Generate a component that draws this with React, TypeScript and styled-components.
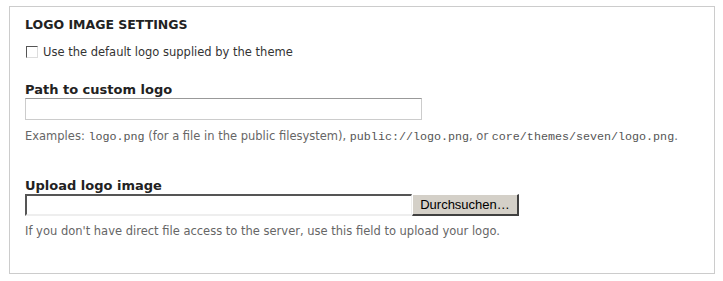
import React from "react";
import styled, { createGlobalStyle } from "styled-components";

const Global = createGlobalStyle`
  html, body { margin: 0; padding: 0; background: #fff; }
  body { font-family: "DejaVu Sans", Verdana, sans-serif; color: #333; }
`;

const Fieldset = styled.fieldset`
  box-sizing: border-box;
  margin: 6px 0 0 9px;
  width: 706px;
  height: 268px;
  border: 1px solid #ccc;
  padding: 0 15px;
  min-width: 0;
`;

const Heading = styled.div`
  margin-top: 10px;
  font-size: 12.5px;
  line-height: 16px;
  font-weight: bold;
  text-transform: uppercase;
  color: #222;
`;

const CheckRow = styled.label`
  display: flex;
  align-items: center;
  gap: 5px;
  margin-top: 11px;
  font-size: 11.5px;
  line-height: 16px;
  color: #333;
`;

const Box = styled.span`
  box-sizing: border-box;
  width: 12px;
  height: 12px;
  margin-left: 1px;
  border: 1px solid #555;
  border-right-color: #ddd;
  border-bottom-color: #ddd;
  background: #fff;
`;

const Label = styled.div<{ $top: number }>`
  margin-top: ${(p) => p.$top}px;
  font-size: 13px;
  line-height: 17px;
  font-weight: bold;
  color: #222;
`;

const TextInput = styled.div`
  box-sizing: border-box;
  width: 397px;
  height: 22px;
  border: 1px solid #ccc;
  border-top-color: #999;
  background: #fff;
`;

const Help = styled.div<{ $top: number }>`
  margin-top: ${(p) => p.$top}px;
  font-size: 11.5px;
  line-height: 14px;
  color: #666;
`;

const Code = styled.code`
  font-family: "Liberation Mono", "Courier New", monospace;
  font-size: 11.7px;
  color: #555;
`;

const FileRow = styled.div`
  display: flex;
  height: 22px;
`;

const FileField = styled.div`
  box-sizing: border-box;
  width: 387px;
  height: 22px;
  border-style: solid;
  border-width: 2px 1px 2px 2px;
  border-color: #555 #eee #eee #555;
  background: #fff;
`;

const Browse = styled.div`
  box-sizing: border-box;
  width: 107px;
  height: 22px;
  display: flex;
  align-items: center;
  justify-content: center;
  background: #d4d0c8;
  border-style: solid;
  border-width: 1px 2px 2px 1px;
  border-color: #fff #404040 #404040 #fff;
  font-family: "Liberation Sans", Arial, sans-serif;
  font-size: 13px;
  color: #000;
`;

export default function App() {
  return (
    <>
      <Global />
      <Fieldset>
        <Heading>Logo image settings</Heading>
        <CheckRow>
          <Box />
          Use the default logo supplied by the theme
        </CheckRow>
        <Label $top={21}>Path to custom logo</Label>
        <TextInput />
        <Help $top={9}>
          Examples: <Code>logo.png</Code> (for a file in the public filesystem),{" "}
          <Code>public://logo.png</Code>, or <Code>core/themes/seven/logo.png</Code>.
        </Help>
        <Label $top={33}>Upload logo image</Label>
        <FileRow>
          <FileField />
          <Browse>Durchsuchen…</Browse>
        </FileRow>
        <Help $top={8}>
          If you don't have direct file access to the server, use this field to upload your logo.
        </Help>
      </Fieldset>
    </>
  );
}
